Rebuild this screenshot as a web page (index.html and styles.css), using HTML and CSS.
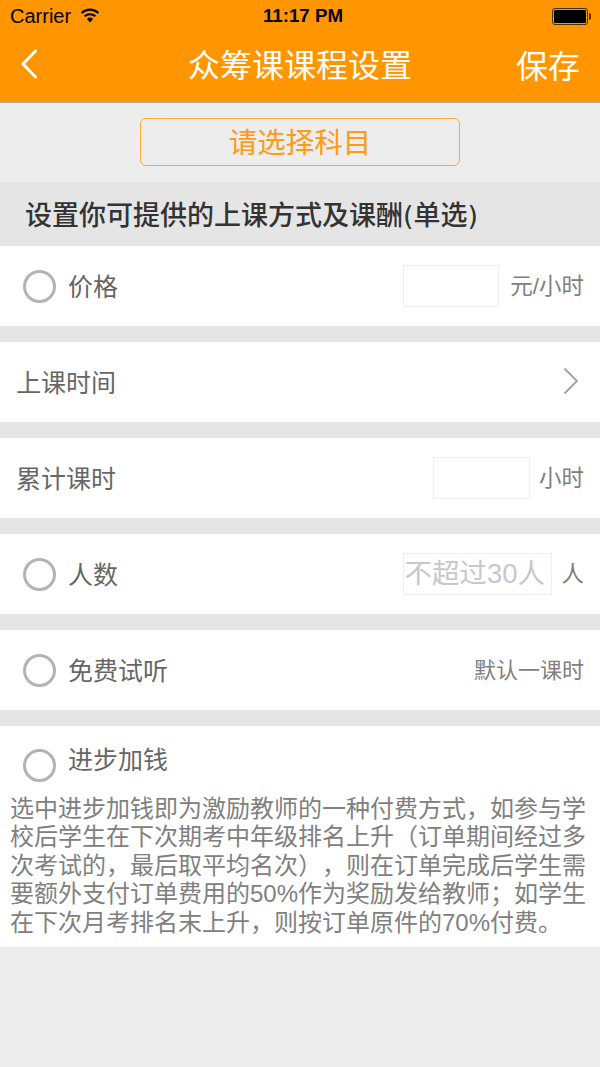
FILE: index.html
```html
<!DOCTYPE html>
<html lang="zh-CN">
<head>
  <meta charset="UTF-8">
  <meta name="viewport" content="width=device-width, initial-scale=1.0">
  <title>众筹课课程设置</title>
  <link rel="stylesheet" href="styles.css">
</head>
<body>
  <header class="top">
    <div class="status">
      <div class="status-left">
        <span>Carrier</span>
        <svg class="wifi" width="20" height="15" viewBox="0 0 20 15">
          <path d="M10 14.5 6.9 10.9a4.6 4.6 0 0 1 6.2 0Z" fill="#000"/>
          <path d="M4.6 8.3a8 8 0 0 1 10.8 0" fill="none" stroke="#000" stroke-width="2.1"/>
          <path d="M1.6 4.9a12.4 12.4 0 0 1 16.8 0" fill="none" stroke="#000" stroke-width="2.1"/>
        </svg>
      </div>
      <span class="clock">11:17 PM</span>
      <div class="battery"><div class="battery-fill"></div></div>
    </div>
    <nav class="nav">
      <svg class="back" width="18" height="30" viewBox="0 0 18 30">
        <path d="M15.5 2 3 15l12.5 13" fill="none" stroke="#fff" stroke-width="3" stroke-linecap="round" stroke-linejoin="round"/>
      </svg>
      <h1 class="nav-title">众筹课课程设置</h1>
      <a class="save">保存</a>
    </nav>
  </header>

  <div class="subject-wrap">
    <button type="button" class="subject">请选择科目</button>
  </div>

  <h2 class="section-title">设置你可提供的上课方式及课酬(单选)</h2>

  <div class="row">
    <span class="radio"></span>
    <span class="label">价格</span>
    <input class="box box-price" type="text">
    <span class="unit">元/小时</span>
  </div>

  <div class="row row-plain">
    <span class="label">上课时间</span>
    <svg class="more" width="16" height="28" viewBox="0 0 16 28">
      <path d="M1.5 1.5 14 14 1.5 26.5" fill="none" stroke="#a0a0a0" stroke-width="1.8"/>
    </svg>
  </div>

  <div class="row row-plain">
    <span class="label">累计课时</span>
    <input class="box box-hours" type="text">
    <span class="unit">小时</span>
  </div>

  <div class="row">
    <span class="radio"></span>
    <span class="label">人数</span>
    <input class="box box-people" type="text" placeholder="不超过30人">
    <span class="unit">人</span>
  </div>

  <div class="row">
    <span class="radio"></span>
    <span class="label">免费试听</span>
    <span class="unit unit-end">默认一课时</span>
  </div>

  <div class="bonus">
    <div class="bonus-head">
      <span class="radio"></span>
      <span class="label">进步加钱</span>
    </div>
    <p class="bonus-text">选中进步加钱即为激励教师的一种付费方式，如参与学校后学生在下次期考中年级排名上升（订单期间经过多次考试的，最后取平均名次），则在订单完成后学生需要额外支付订单费用的50%作为奖励发给教师；如学生在下次月考排名末上升，则按订单原件的70%付费。</p>
  </div>
</body>
</html>
```

FILE: styles.css
```css
* {
  box-sizing: border-box;
}
html, body {
  height: 100%;
}
body {
  margin: 0;
  background-color: #ededed;
  font-family: "Liberation Sans", "Noto Sans CJK SC", sans-serif;
  color: #555;
  overflow: hidden;
  text-spacing-trim: space-all;
}

.top {
  height: 103px;
  background-color: #ff9500;
  border-bottom: 1px solid #b8b0a4;
}
.status {
  height: 32px;
  padding: 0 9px 0 10px;
  display: flex;
  align-items: center;
  justify-content: space-between;
  color: #000;
  font-size: 20px;
  position: relative;
}
.status-left {
  display: flex;
  align-items: center;
  gap: 9px;
}
.wifi {
  margin-top: -2px;
}
.clock {
  position: absolute;
  left: 263px;
  top: 5px;
  font-weight: 700;
  font-size: 18.7px;
  line-height: 22px;
}
.battery {
  width: 36px;
  height: 17px;
  margin-right: 3px;
  border: 1px solid #4d3000;
  border-radius: 3px;
  padding: 1px;
  position: relative;
}
.battery::after {
  content: "";
  position: absolute;
  right: -4px;
  top: 4px;
  width: 2px;
  height: 7px;
  background-color: #4d3000;
  border-radius: 0 2px 2px 0;
}
.battery-fill {
  height: 100%;
  background-color: #000;
  border-radius: 1px;
}

.nav {
  height: 70px;
  padding: 0 20px 0 20px;
  display: flex;
  align-items: center;
  justify-content: space-between;
  position: relative;
}
.back {
  margin-top: -6px;
}
.nav-title {
  position: absolute;
  left: 0;
  right: 0;
  top: 10px;
  margin: 0;
  text-align: center;
  font-size: 32px;
  font-weight: 400;
  line-height: 48px;
  color: #fff;
}
.save {
  font-size: 32px;
  line-height: 48px;
  color: #fff;
  margin-top: -1px;
}

.subject-wrap {
  height: 79px;
  padding-top: 15px;
  display: flex;
  justify-content: center;
  align-items: flex-start;
}
.subject {
  width: 320px;
  height: 48px;
  padding: 2px 0 0;
  background: none;
  border: 1px solid #ffa92e;
  border-radius: 6px;
  color: #ff9a14;
  font-family: inherit;
  font-size: 28.5px;
  line-height: 44px;
}

.section-title {
  margin: 0;
  height: 64px;
  padding-left: 25px;
  background-color: #e5e5e5;
  color: #333;
  font-family: "DejaVu Sans", "Noto Sans CJK SC", sans-serif;
  font-size: 27px;
  font-weight: 500;
  line-height: 68px;
}

.row {
  height: 80px;
  margin-bottom: 16px;
  padding: 0 16px 0 23px;
  background-color: #fff;
  display: flex;
  align-items: center;
  box-shadow: 0 16px 0 #e5e5e5;
}
.row-plain {
  padding-left: 16px;
}
.radio {
  flex: none;
  width: 33px;
  height: 33px;
  margin-right: 12px;
  border: 3px solid #b3b3b3;
  border-radius: 50%;
}
.label {
  font-size: 25px;
  line-height: 36px;
  padding-top: 2px;
  margin-right: auto;
  color: #666;
}
.more {
  margin-right: 5px;
  margin-top: -3px;
}
.box {
  height: 42px;
  padding: 0;
  border: 1px solid #eee;
  background-color: #fff;
  font-family: inherit;
  font-size: 27.5px;
  outline: none;
}
.box::placeholder {
  color: #c7c7cd;
  opacity: 1;
}
.box-price {
  width: 96px;
  margin-right: 11px;
}
.box-hours {
  width: 97px;
  margin-right: 9px;
}
.box-people {
  width: 149px;
  margin-right: 9px;
}
.unit {
  font-size: 22.5px;
  line-height: 32px;
  padding-top: 2px;
  color: #808080;
}
.unit-end {
  font-size: 22px;
}

.bonus {
  height: 221px;
  background-color: #fff;
}
.bonus-head {
  height: 60px;
  padding-left: 23px;
  display: flex;
  align-items: flex-start;
}
.bonus-head .radio {
  margin-top: 23px;
}
.bonus-head .label {
  margin-top: 14px;
}
.bonus-text {
  margin: 0;
  padding: 9px 10px 0 10px;
  font-size: 24px;
  line-height: 28.4px;
  color: #808080;
}
```
